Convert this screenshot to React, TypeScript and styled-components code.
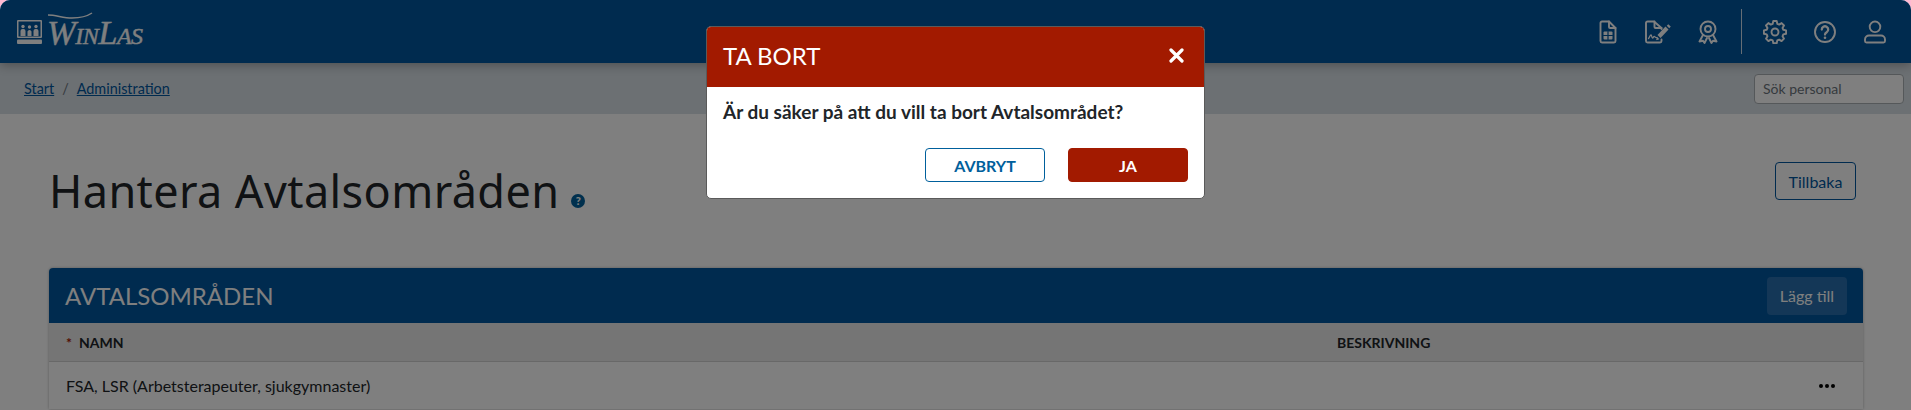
import React from "react";
import styled, { createGlobalStyle } from "styled-components";

const GlobalStyle = createGlobalStyle`
  html, body {
    margin: 0;
    padding: 0;
    height: 100%;
    overflow: hidden;
    background: #ffb9d2;
    font-family: Lato, "Open Sans", sans-serif;
    color: #212529;
  }
  * {
    box-sizing: border-box;
  }
`;

const Page = styled.div`
  position: relative;
  height: 410px;
  overflow: hidden;
  background: #ffffff;
  border-radius: 10px 10px 0 0;
`;

const Header = styled.header`
  height: 63px;
  background: #00569e;
  display: flex;
  align-items: center;
  padding-left: 17px;
  box-shadow: 0 2px 10px rgba(0, 0, 0, 0.3);
  position: relative;
`;

const Logo = styled.div`
  display: flex;
  align-items: center;
  gap: 5px;
  color: #ffffff;
`;

const LogoText = styled.div`
  position: relative;
  font-family: "Liberation Serif", serif;
  font-style: italic;
  font-size: 34.5px;
  line-height: 32px;
  letter-spacing: -0.5px;
  font-variant: small-caps;
  -webkit-text-stroke: 0.4px currentColor;
`;

const Swoosh = styled.svg`
  position: absolute;
  left: 0;
  top: -4px;
`;

const HeaderIcons = styled.div`
  margin-left: auto;
  display: flex;
  align-items: center;
  padding-right: 11px;
`;

const IconSlot = styled.div`
  width: 50px;
  display: flex;
  justify-content: center;
  color: #ffffff;
`;

const Divider = styled.div`
  width: 1px;
  height: 45px;
  background: rgba(255, 255, 255, 0.8);
  margin: 0 8px;
`;

const BreadcrumbBar = styled.div`
  height: 51px;
  background: #d8e0e6;
  display: flex;
  align-items: center;
  padding: 0 7px 0 24px;
  font-size: 14.4px;
`;

const Crumb = styled.a`
  color: #00569e;
  text-decoration: underline;
`;

const CrumbSep = styled.span`
  color: #6c757d;
  margin: 0 8px;
`;

const Search = styled.input`
  margin-left: auto;
  width: 150px;
  height: 30px;
  border: 1px solid #aab0b5;
  border-radius: 4px;
  background: #ffffff;
  padding: 0 8px;
  font-family: Lato, sans-serif;
  font-size: 14px;
  &::placeholder {
    color: #6c757d;
    opacity: 1;
  }
`;

const Content = styled.main`
  padding: 48px 48px 0 49px;
`;

const TitleRow = styled.div`
  display: flex;
  align-items: flex-start;
  justify-content: space-between;
  height: 57px;
  padding-right: 7px;
`;

const TitleGroup = styled.div`
  display: flex;
  align-items: flex-end;
  gap: 12px;
`;

const Title = styled.h1`
  margin: 0;
  font-family: "Noto Sans", sans-serif;
  font-weight: 400;
  font-size: 45px;
  line-height: 57px;
  letter-spacing: 0.4px;
  color: #212529;
`;

const HelpDot = styled.span`
  width: 14px;
  height: 14px;
  border-radius: 50%;
  background: #00609c;
  color: #ffffff;
  font-size: 11px;
  font-weight: 900;
  line-height: 14px;
  text-align: center;
  margin-bottom: 11px;
`;

const OutlineButton = styled.button`
  width: 81px;
  height: 38px;
  border: 1px solid #00569e;
  border-radius: 4px;
  background: transparent;
  color: #00569e;
  font-family: Lato, sans-serif;
  font-size: 16px;
  padding: 0;
`;

const Panel = styled.section`
  margin-top: 49px;
  border-radius: 4px 4px 0 0;
  box-shadow: 0 0 3px rgba(0, 0, 0, 0.3);
`;

const PanelHeader = styled.div`
  height: 55px;
  background: #00569e;
  border-radius: 4px 4px 0 0;
  display: flex;
  align-items: center;
  justify-content: space-between;
  padding: 0 16px;
`;

const PanelTitle = styled.h2`
  margin: 0;
  font-family: Lato, sans-serif;
  font-weight: 400;
  font-size: 24px;
  color: #ffffff;
`;

const AddButton = styled.button`
  width: 80px;
  height: 38px;
  border: none;
  border-radius: 4px;
  background: #286fae;
  color: #ffffff;
  font-family: Lato, sans-serif;
  font-size: 16px;
  padding: 0;
`;

const TableRow = styled.div`
  display: grid;
  grid-template-columns: 1271px 1fr 60px;
  align-items: center;
  padding-left: 17px;
`;

const HeadRow = styled(TableRow)`
  height: 39px;
  background: #ebebeb;
  border-bottom: 1px solid #d0d0d0;
  font-size: 14px;
  font-weight: 700;
  color: #212529;
`;

const BodyRow = styled(TableRow)`
  height: 47px;
  font-size: 16px;
`;

const Required = styled.span`
  color: #a51c00;
  margin-right: 7px;
`;

const Dots = styled.div`
  display: flex;
  gap: 2px;
  justify-content: center;
  padding-right: 12px;
`;

const Dot = styled.span`
  width: 4px;
  height: 4px;
  border-radius: 50%;
  background: #000000;
`;

const Backdrop = styled.div`
  position: absolute;
  inset: 0;
  z-index: 10;
  background: rgba(0, 0, 0, 0.5);
`;

const Modal = styled.div`
  position: absolute;
  top: 26px;
  left: 706px;
  z-index: 20;
  width: 499px;
  height: 173px;
  background: #ffffff;
  border: 1px solid #5a5a5a;
  border-radius: 5px;
  overflow: hidden;
`;

const ModalHeader = styled.div`
  height: 60px;
  background: #a21a00;
  color: #ffffff;
  display: flex;
  align-items: center;
  justify-content: space-between;
  padding: 0 20px 4px 16px;
`;

const ModalTitle = styled.h5`
  margin: 0;
  font-weight: 400;
  font-size: 24px;
`;

const ModalBody = styled.div`
  padding: 13px 16px 0;
  font-size: 19px;
  font-weight: 700;
  line-height: 24px;
  color: #212529;
`;

const ModalFooter = styled.div`
  display: flex;
  justify-content: flex-end;
  gap: 23px;
  margin-top: 24px;
`;

const ModalButton = styled.button<{ $primary?: boolean }>`
  width: 120px;
  height: 34px;
  border: 1px solid ${(p) => (p.$primary ? "#a21a00" : "#00609c")};
  border-radius: 4px;
  background: ${(p) => (p.$primary ? "#a21a00" : "#ffffff")};
  color: ${(p) => (p.$primary ? "#ffffff" : "#00609c")};
  font-family: Lato, sans-serif;
  font-size: 16px;
  font-weight: 700;
  padding: 0;
`;

const stroke = {
  fill: "none",
  stroke: "currentColor",
  strokeWidth: 1.9,
  strokeLinecap: "round" as const,
  strokeLinejoin: "round" as const,
};

function FileCalcIcon() {
  return (
    <svg width="24" height="24" viewBox="0 0 24 24" {...stroke}>
      <path d="M13 1.500H6A1.500 1.500 0 0 0 4.500 3v18A1.500 1.500 0 0 0 6 22.500h12a1.500 1.500 0 0 0 1.500-1.500V8z" />
      <path d="M13 1.500V7a1 1 0 0 0 1 1h5.500" />
      <rect x="7.500" y="11.500" width="9" height="8" fill="currentColor" stroke="none" rx="1" />
      <path d="M12 11.500v8M7.500 15.500h9" stroke="#00569e" strokeWidth="1.200" />
    </svg>
  );
}

function SignatureIcon() {
  return (
    <svg width="28" height="24" viewBox="0 0 28 24" {...stroke}>
      <path d="M17.500 19.500V21a1.500 1.500 0 0 1-1.500 1.500H3.500A1.500 1.500 0 0 1 2 21V3a1.500 1.500 0 0 1 1.500-1.500H10L17.500 8v1" />
      <path d="M10.500 1.500V7a1 1 0 0 0 1 1h6" />
      <path d="M4.500 18.500c1-1 1.500-3.500 2.500-3.500s.5 3 1.500 3 1-2 2-1.500 1 1.500 2.500 1" strokeWidth="1.300" />
      <path d="M15 16.500l8-8.500" strokeWidth="4.200" strokeLinecap="butt" />
      <path d="M24 7l1.500-1.600" strokeWidth="3.500" strokeLinecap="butt" />
      <path d="M13.500 18l-.7 1.500 1.700-.6" strokeWidth="1.300" />
    </svg>
  );
}

function AwardIcon() {
  return (
    <svg width="24" height="24" viewBox="0 0 24 24" {...stroke}>
      <circle cx="12" cy="9" r="7.500" />
      <circle cx="12" cy="9" r="3" />
      <path d="M7 15l-3.500 6.500 3.500-.7 1.500 2.200 2.500-5" />
      <path d="M17 15l3.500 6.500-3.500-.7-1.500 2.200-2.500-5" />
    </svg>
  );
}

function GearIcon() {
  return (
    <svg width="24" height="24" viewBox="0 0 24 24" {...stroke}>
      <circle cx="12" cy="12" r="3.500" />
      <path d="M10.300 2h3.400l.6 2.800 1.900.8 2.400-1.500 2.400 2.400-1.500 2.400.8 1.900 2.800.6v3.400l-2.800.6-.8 1.900 1.500 2.400-2.400 2.400-2.400-1.500-1.900.8-.6 2.800h-3.400l-.6-2.800-1.900-.8-2.400 1.500-2.400-2.400 1.500-2.400-.8-1.900-2.800-.6v-3.400l2.800-.6.800-1.900-1.500-2.400 2.400-2.400 2.400 1.500 1.900-.8z" transform="translate(0 -1)" />
    </svg>
  );
}

function HelpIcon() {
  return (
    <svg width="24" height="24" viewBox="0 0 24 24" {...stroke}>
      <circle cx="12" cy="12" r="10" />
      <path d="M8.800 9.500a3.200 3.200 0 1 1 4.900 2.700c-1.100.7-1.700 1.300-1.700 2.300" strokeWidth="2.300" />
      <circle cx="12" cy="17.800" r="1.300" fill="currentColor" stroke="none" />
    </svg>
  );
}

function UserIcon() {
  return (
    <svg width="24" height="24" viewBox="0 0 24 24" {...stroke}>
      <circle cx="12" cy="6.800" r="5.300" />
      <path d="M6 15.500h12a4 4 0 0 1 4 4v1.500a1.500 1.500 0 0 1-1.500 1.500h-17A1.500 1.500 0 0 1 2 21v-1.500a4 4 0 0 1 4-4z" />
    </svg>
  );
}

function LogoMark() {
  return (
    <svg width="25" height="24" viewBox="0 0 25 24" fill="currentColor">
      <path fillRule="evenodd" d="M1 0h23a1 1 0 0 1 1 1v16a1 1 0 0 1-1 1H1a1 1 0 0 1-1-1V1a1 1 0 0 1 1-1zm.500 1.500v15h22v-15z" />
      <circle cx="6" cy="6.500" r="1.700" />
      <circle cx="12.500" cy="7" r="1.700" />
      <circle cx="19" cy="6.500" r="1.700" />
      <path d="M3.500 16v-5a2 2 0 0 1 2-2h1a2 2 0 0 1 2 2v5zM10.500 16v-4.500a2 2 0 0 1 2-1.500 2 2 0 0 1 2 1.500V16zM16.500 16v-5a2 2 0 0 1 2-2h1a2 2 0 0 1 2 2v5z" />
      <rect x="0" y="19.500" width="25" height="4.500" rx="1" />
    </svg>
  );
}

function CloseIcon() {
  return (
    <svg width="15" height="15" viewBox="0 0 15 15" fill="none" stroke="currentColor" strokeWidth="3.200" strokeLinecap="round">
      <path d="M2 2l11 11M13 2L2 13" />
    </svg>
  );
}

export default function App() {
  return (
    <Page>
      <GlobalStyle />
      <Header>
        <Logo>
          <LogoMark />
          <LogoText>
            <Swoosh width="100" height="12" viewBox="0 0 100 12" fill="none" stroke="currentColor" strokeWidth="1.500">
              <path d="M1 3c8 0 15 3 24 3s14-1 20-5" />
            </Swoosh>
            WinLas
          </LogoText>
        </Logo>
        <HeaderIcons>
          <IconSlot><FileCalcIcon /></IconSlot>
          <IconSlot><SignatureIcon /></IconSlot>
          <IconSlot><AwardIcon /></IconSlot>
          <Divider />
          <IconSlot><GearIcon /></IconSlot>
          <IconSlot><HelpIcon /></IconSlot>
          <IconSlot><UserIcon /></IconSlot>
        </HeaderIcons>
      </Header>
      <BreadcrumbBar>
        <Crumb>Start</Crumb>
        <CrumbSep>/</CrumbSep>
        <Crumb>Administration</Crumb>
        <Search placeholder="Sök personal" />
      </BreadcrumbBar>
      <Content>
        <TitleRow>
          <TitleGroup>
            <Title>Hantera Avtalsområden</Title>
            <HelpDot>?</HelpDot>
          </TitleGroup>
          <OutlineButton>Tillbaka</OutlineButton>
        </TitleRow>
        <Panel>
          <PanelHeader>
            <PanelTitle>AVTALSOMRÅDEN</PanelTitle>
            <AddButton>Lägg till</AddButton>
          </PanelHeader>
          <HeadRow>
            <div><Required>*</Required>NAMN</div>
            <div>BESKRIVNING</div>
            <div />
          </HeadRow>
          <BodyRow>
            <div>FSA, LSR (Arbetsterapeuter, sjukgymnaster)</div>
            <div />
            <Dots><Dot /><Dot /><Dot /></Dots>
          </BodyRow>
        </Panel>
      </Content>
      <Backdrop />
      <Modal>
        <ModalHeader>
          <ModalTitle>TA BORT</ModalTitle>
          <CloseIcon />
        </ModalHeader>
        <ModalBody>
          Är du säker på att du vill ta bort Avtalsområdet?
          <ModalFooter>
            <ModalButton>AVBRYT</ModalButton>
            <ModalButton $primary>JA</ModalButton>
          </ModalFooter>
        </ModalBody>
      </Modal>
    </Page>
  );
}
